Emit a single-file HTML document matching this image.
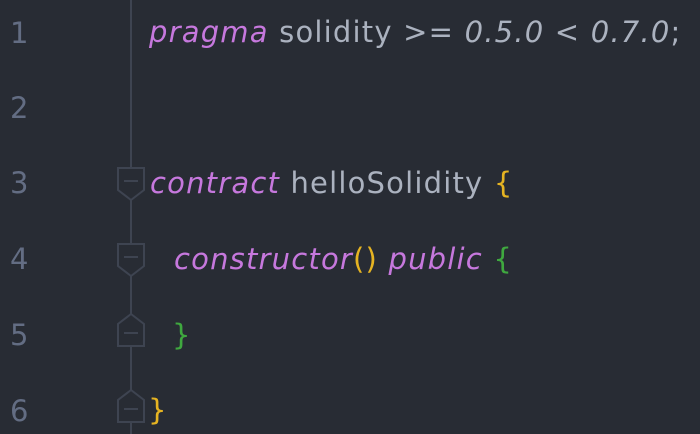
<!DOCTYPE html>
<html><head><style>
html,body{margin:0;padding:0;background:#282c34;width:700px;height:434px;overflow:hidden}
body{position:relative;font-family:"DejaVu Sans",sans-serif}
.n{position:absolute;left:10px;color:#636d83;font-size:29px;line-height:34px;font-family:"DejaVu Sans",sans-serif}
.l{position:absolute;font-size:29px;line-height:36px;color:#abb2bf;white-space:pre;letter-spacing:1.2px}
.k{color:#c678dd;font-style:italic}
.y{color:#e6b422}
.g{color:#3fa83f}
.i{font-style:italic}
</style></head><body>
<svg width="700" height="434" style="position:absolute;left:0;top:0">
<g stroke="#3e4451" stroke-width="2" fill="none">
<line x1="131" y1="0" x2="131" y2="168"/>
<line x1="131" y1="200" x2="131" y2="244"/>
<line x1="131" y1="276" x2="131" y2="314"/>
<line x1="131" y1="346" x2="131" y2="390"/>
<line x1="131" y1="422" x2="131" y2="434"/>
<path d="M118 168H144V190L131 200L118 190Z"/>
<path d="M124 181H138"/>
<path d="M118 244H144V266L131 276L118 266Z"/>
<path d="M124 257H138"/>
<path d="M118 346H144V324L131 314L118 324Z"/>
<path d="M124 333H138"/>
<path d="M118 422H144V400L131 390L118 400Z"/>
<path d="M124 409H138"/>
</g></svg>
<div class="n" style="top:16px">1</div>
<div class="n" style="top:91px">2</div>
<div class="n" style="top:166px">3</div>
<div class="n" style="top:242px">4</div>
<div class="n" style="top:318px">5</div>
<div class="n" style="top:394px">6</div>
<div class="l" style="left:149px;top:14px"><span class="k">pragma</span> solidity &gt;= <span class="i">0.5.0</span> &lt; <span class="i">0.7.0</span>;</div>
<div class="l" style="left:150px;top:165px"><span class="k">contract</span> helloSolidity <span class="y">{</span></div>
<div class="l" style="left:174px;top:241px"><span class="k">constructor</span><span class="y">()</span> <span class="k">public</span> <span class="g">{</span></div>
<div class="l" style="left:172px;top:317px"><span class="g">}</span></div>
<div class="l" style="left:148px;top:392px"><span class="y">}</span></div>
</body></html>
